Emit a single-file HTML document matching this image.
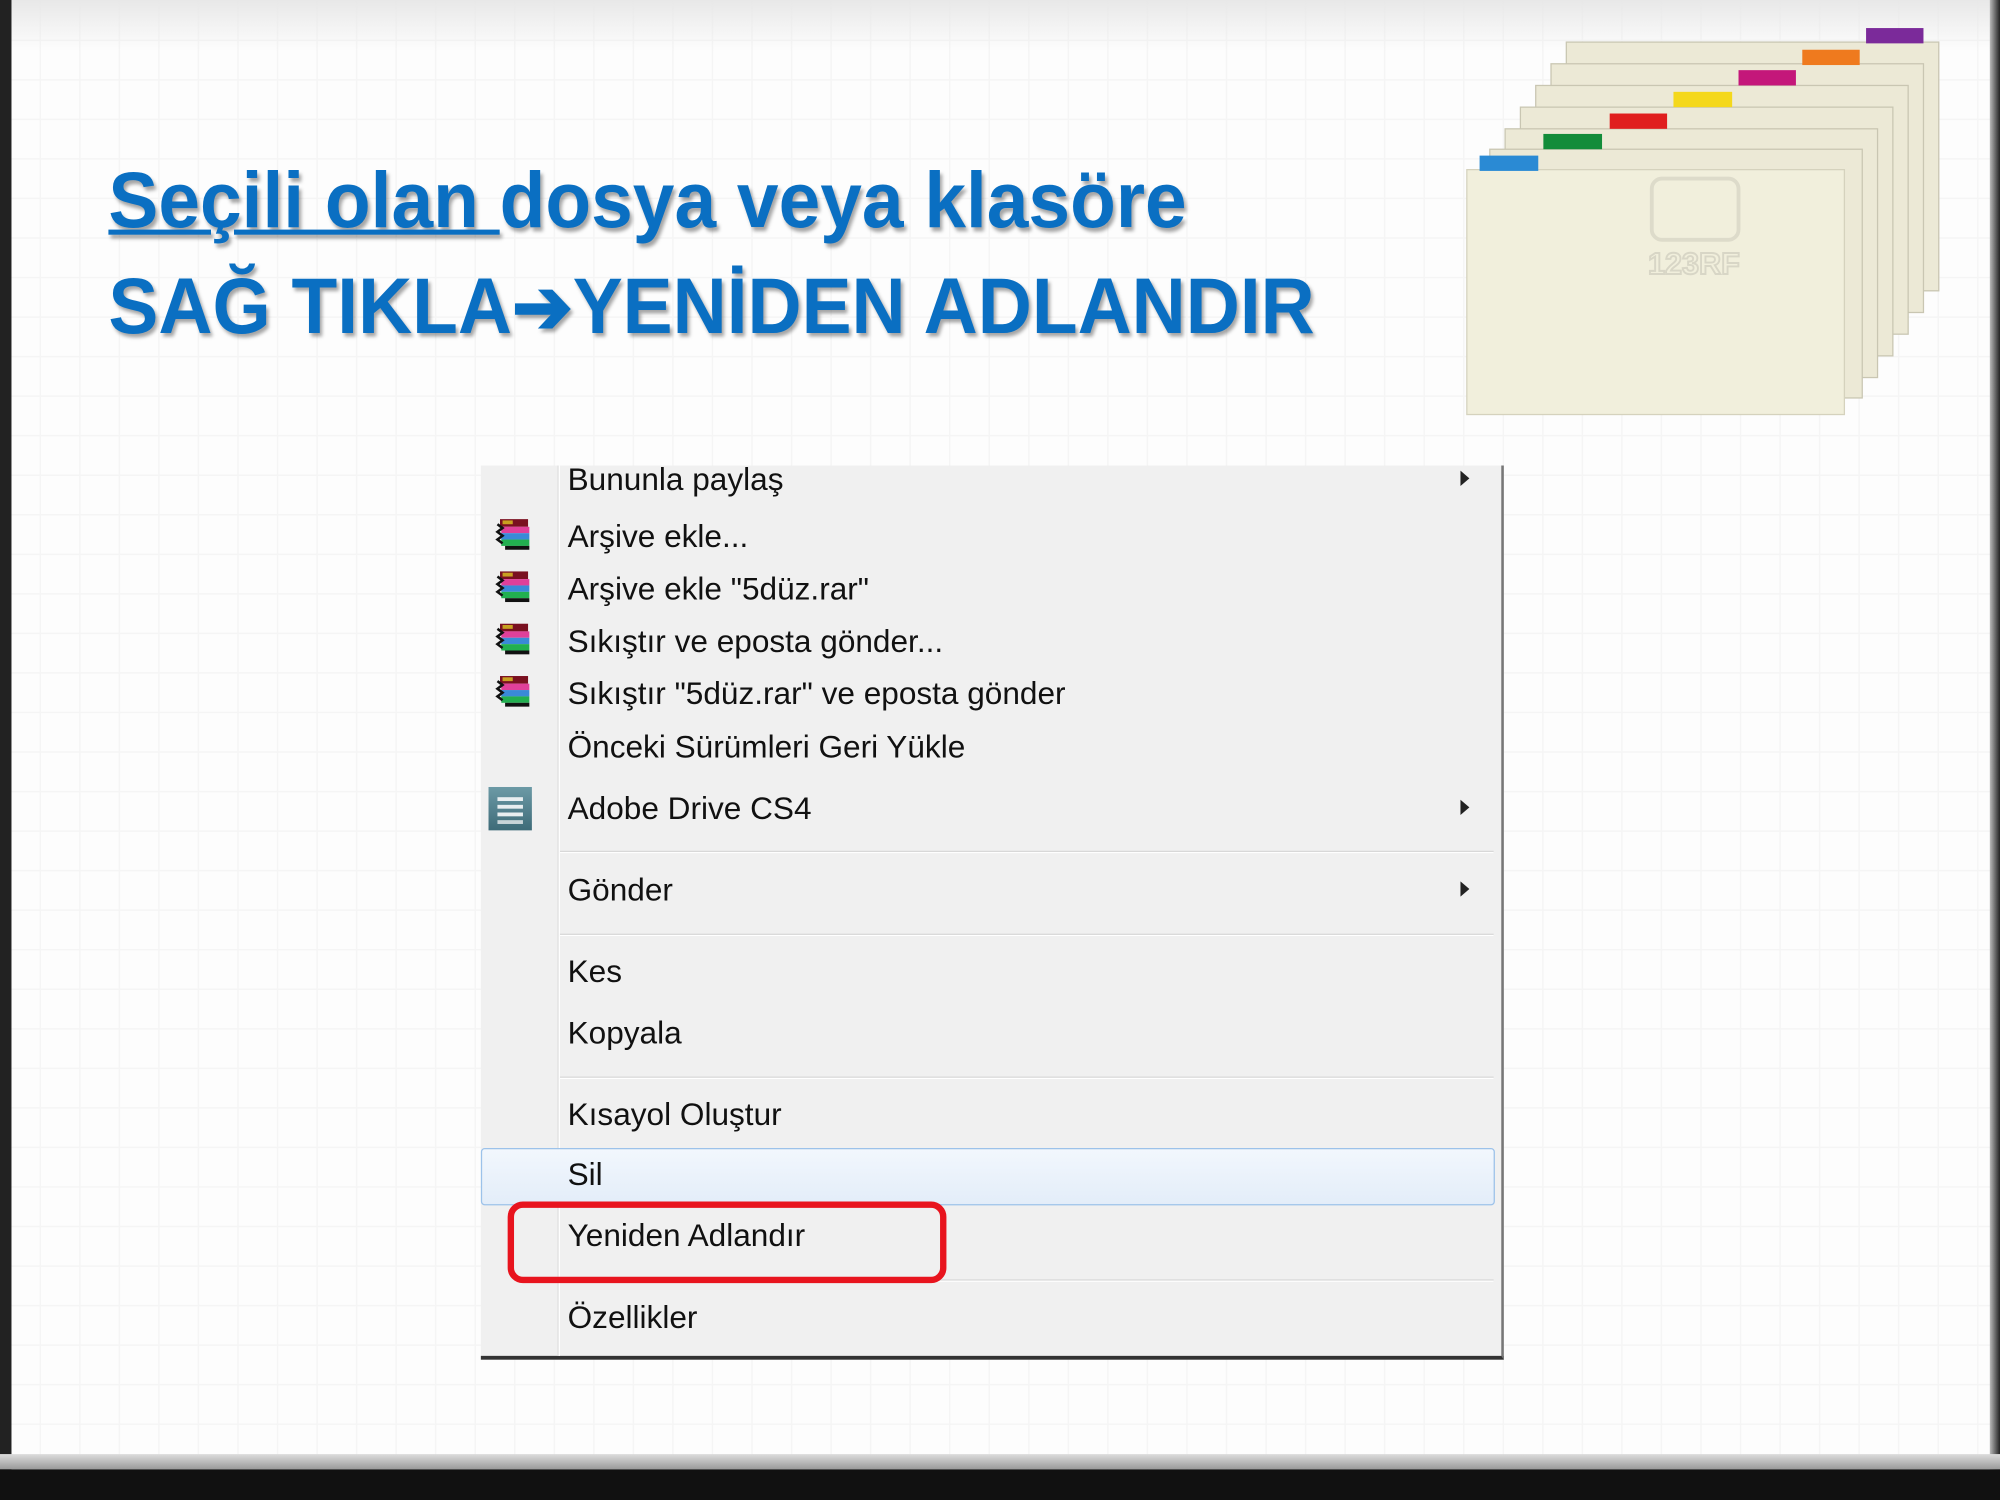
<!DOCTYPE html>
<html><head><meta charset="utf-8"><style>
html,body{margin:0;padding:0;width:2000px;height:1500px;overflow:hidden;background:#fff}
#w{position:absolute;left:0;top:0;width:1568px;height:1176px;transform:scale(1.27551);transform-origin:0 0;
background-color:#fdfdfd;
background-image:linear-gradient(#f5f5f5 1px,transparent 1px),linear-gradient(90deg,#f5f5f5 1px,transparent 1px);
background-size:31px 31px;font-family:"Liberation Sans",sans-serif}
.t{position:absolute;left:85px;font-weight:bold;color:#0a6fc2;font-size:62px;white-space:nowrap;transform:scaleX(0.947);transform-origin:0 0;text-shadow:2px 3px 3px rgba(0,0,0,.35)}
.menu{position:absolute;left:377px;top:365px;width:800px;height:698px;background:#f0f0f0;border-right:2px solid #777;border-bottom:3px solid #333}
.col{position:absolute;left:60px;top:0;width:1px;height:100%;background:#e0e0e0;border-right:1px solid #fff}
.it{position:absolute;left:68px;font-size:25px;color:#111;white-space:nowrap;transform:scaleX(0.99);transform-origin:0 50%;line-height:30px}
.sep{position:absolute;left:62px;right:6px;height:1px;background:#d8d8d8;border-bottom:1px solid #fff}
.ar{position:absolute;left:768px;width:0;height:0;border-left:7px solid #222;border-top:6px solid transparent;border-bottom:6px solid transparent}
.rar{position:absolute;left:388px;width:30px;height:28px}
</style></head><body><div id="w">
<div style="position:absolute;left:0;top:0;width:1568px;height:40px;background:linear-gradient(#e8e8e8,rgba(255,255,255,0))"></div>
<div style="position:absolute;left:0;top:0;width:9px;height:1176px;background:#222"></div>
<div style="position:absolute;right:0;top:0;width:8px;height:1176px;background:linear-gradient(90deg,#bbb,#222)"></div>
<div style="position:absolute;left:0;top:1140px;width:1568px;height:12px;background:linear-gradient(#ddd,#999)"></div>
<div style="position:absolute;left:0;top:1152px;width:1568px;height:24px;background:#111"></div>

<div class="t" style="top:122px"><span style="text-decoration:underline;text-decoration-thickness:4px">Seçili olan </span>dosya veya klasöre</div>
<div class="t" style="top:205px">SAĞ TIKLA<span style="font-size:60px">➔</span>YENİDEN ADLANDIR</div>

<svg style="position:absolute;left:1140px;top:15px" width="390" height="320" viewBox="1140 15 390 320">
<g fill="#ece9d6" stroke="#c9c6b2" stroke-width="1">
<rect x="1228" y="33" width="292" height="195"/>
<rect x="1216" y="50" width="292" height="195"/>
<rect x="1204" y="67" width="292" height="195"/>
<rect x="1192" y="84" width="292" height="195"/>
<rect x="1180" y="101" width="292" height="195"/>
<rect x="1168" y="117" width="292" height="195"/>
</g>
<rect x="1150" y="133" width="296" height="192" fill="#f1efdc" stroke="#d5d2bd"/>
<rect x="1463" y="22" width="45" height="12" fill="#7b2a9a"/>
<rect x="1413" y="39" width="45" height="12" fill="#ef7a1e"/>
<rect x="1363" y="55" width="45" height="12" fill="#c4177a"/>
<rect x="1312" y="72" width="46" height="12" fill="#f4d81c"/>
<rect x="1262" y="89" width="45" height="12" fill="#e01e1e"/>
<rect x="1210" y="105" width="46" height="12" fill="#138c3a"/>
<rect x="1160" y="122" width="46" height="12" fill="#2a8ad4"/>
<text x="1292" y="215" font-family="Liberation Sans" font-weight="bold" font-size="24" fill="none" stroke="#d8d6c6" stroke-width="1.5">123RF</text>
<rect x="1295" y="140" width="68" height="48" rx="8" fill="none" stroke="#dddbca" stroke-width="3"/>
</svg>

<div class="menu">
<div class="col"></div>
<div class="it" style="top:-4px">Bununla paylaş</div>
<div class="ar" style="top:4px"></div>
<div class="it" style="top:41px">Arşive ekle...</div>
<div class="it" style="top:82px">Arşive ekle "5düz.rar"</div>
<div class="it" style="top:123px">Sıkıştır ve eposta gönder...</div>
<div class="it" style="top:164px">Sıkıştır "5düz.rar" ve eposta gönder</div>
<div class="it" style="top:206px">Önceki Sürümleri Geri Yükle</div>
<div class="it" style="top:254px">Adobe Drive CS4</div>
<div class="ar" style="top:262px"></div>
<div class="sep" style="top:302px"></div>
<div class="it" style="top:318px">Gönder</div>
<div class="ar" style="top:326px"></div>
<div class="sep" style="top:367px"></div>
<div class="it" style="top:382px">Kes</div>
<div class="it" style="top:430px">Kopyala</div>
<div class="sep" style="top:479px"></div>
<div style="position:absolute;left:0;top:535px;width:793px;height:43px;border:1px solid #9cc2ea;border-radius:3px;background:linear-gradient(#f2f7fd,#e3edf9)"></div>
<div class="it" style="top:494px">Kısayol Oluştur</div>
<div class="it" style="top:541px">Sil</div>
<div class="it" style="top:589px">Yeniden Adlandır</div>
<div class="sep" style="top:638px"></div>
<div class="it" style="top:653px">Özellikler</div>
<div style="position:absolute;left:21px;top:577px;width:334px;height:54px;border:5px solid #e8141e;border-radius:12px"></div>
<div style="position:absolute;left:6px;top:252px;width:34px;height:34px;background:linear-gradient(#6c9aa6,#3e6b78)">
<div style="margin:8px 7px;height:3px;background:#e8eef0;box-shadow:0 6px 0 #e8eef0,0 12px 0 #e8eef0,0 18px 0 #c8d4d8"></div></div>
</div>
<svg class="rar" style="top:405px" viewBox="0 0 30 28"><g id="r"><rect x="4" y="2" width="22" height="6" fill="#7a1020"/><rect x="6" y="3" width="8" height="3" fill="#c8a020"/><rect x="5" y="8" width="22" height="5" fill="#e0409a"/><rect x="5" y="13" width="22" height="5" fill="#3a8ad8"/><rect x="5" y="18" width="22" height="5" fill="#22b050"/><path d="M2 6l4 3-4 3 4 3-4 3 4 3" stroke="#111" fill="none" stroke-width="2"/><rect x="8" y="23" width="19" height="3" fill="#111"/></g></svg>
<svg class="rar" style="top:446px" viewBox="0 0 30 28"><use href="#r"/></svg>
<svg class="rar" style="top:487px" viewBox="0 0 30 28"><use href="#r"/></svg>
<svg class="rar" style="top:528px" viewBox="0 0 30 28"><use href="#r"/></svg>
</div></body></html>
